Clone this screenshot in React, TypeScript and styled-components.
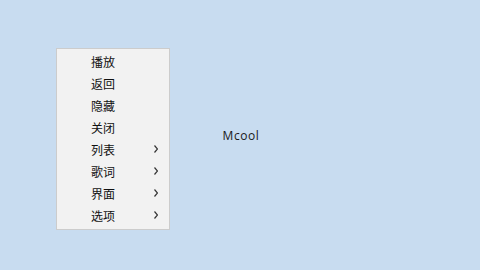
import styled, { createGlobalStyle } from "styled-components";

const Global = createGlobalStyle`
    html, body {
        margin: 0;
        padding: 0;
    }
    body {
        background: #c8dcf0;
        font-family: "Noto Sans", "Noto Sans CJK SC", sans-serif;
    }
`

const items = [
    {label: "播放", sub: false},
    {label: "返回", sub: false},
    {label: "隐藏", sub: false},
    {label: "关闭", sub: false},
    {label: "列表", sub: true},
    {label: "歌词", sub: true},
    {label: "界面", sub: true},
    {label: "选项", sub: true},
];

export default function App() {
    return (
        <>
            <Global/>
            <Stage>
                <Title>Mcool</Title>
                <Menu>
                    {items.map((item) => (
                        <MenuItem key={item.label}>
                            <Label>{item.label}</Label>
                            {item.sub && (
                                <Arrow viewBox="0 0 4 8">
                                    <path d="M0.5 0.5 L3.5 4 L0.5 7.5" fill="none" stroke="#333" strokeWidth="1.2"/>
                                </Arrow>
                            )}
                        </MenuItem>
                    ))}
                </Menu>
            </Stage>
        </>
    );
}

const Stage = styled.div`
    position: relative;
    width: 480px;
    height: 270px;
    display: flex;
    align-items: center;
    justify-content: center;
`
const Title = styled.span`
    margin-top: 1px;
    margin-left: 2px;
    font-family: "Open Sans", "Noto Sans", sans-serif;
    font-size: 12px;
    letter-spacing: 0.6px;
    color: #1a1a1a;
`
const Menu = styled.ul`
    position: absolute;
    left: 56px;
    top: 48px;
    width: 112px;
    margin: 0;
    padding: 1px 0 3px;
    list-style: none;
    background: #f2f2f2;
    border: 1px solid #cccccc;
`
const MenuItem = styled.li`
    height: 22px;
    display: flex;
    align-items: center;
    padding-left: 34px;
    padding-right: 11px;
`
const Label = styled.span`
    flex: 1;
    font-family: "Noto Sans CJK SC", sans-serif;
    font-size: 12px;
    color: #111;
`
const Arrow = styled.svg`
    width: 4px;
    height: 8px;
`
